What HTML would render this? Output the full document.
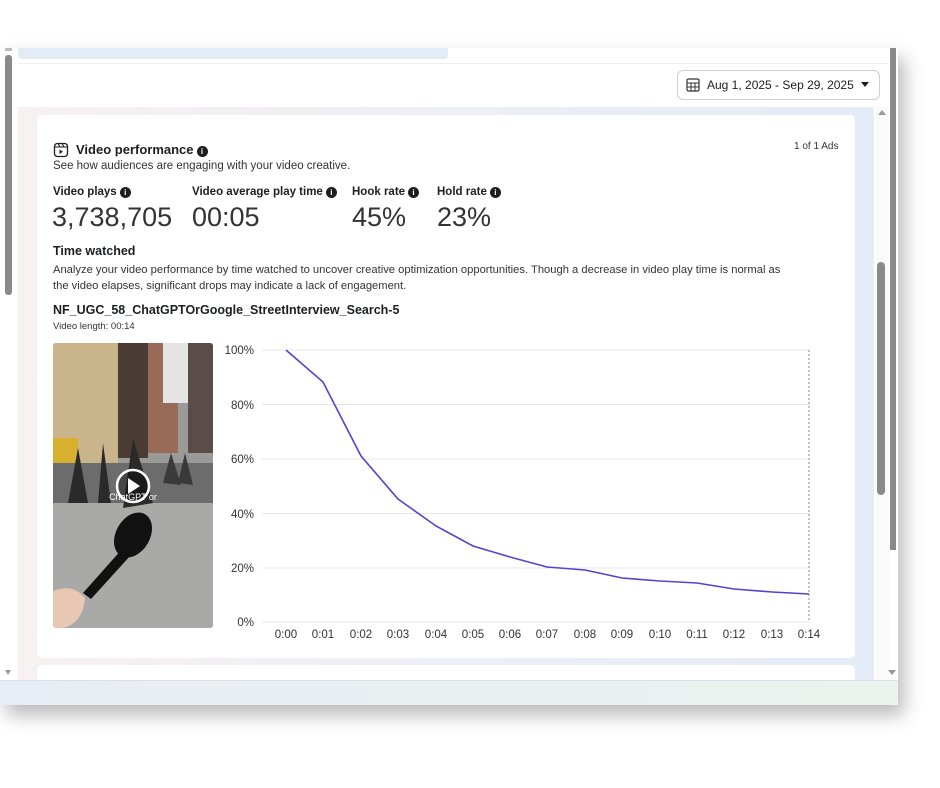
<!DOCTYPE html>
<html><head><meta charset="utf-8"><style>
*{margin:0;padding:0;box-sizing:border-box}
body{width:940px;height:788px;background:#fff;font-family:"Liberation Sans",sans-serif;position:relative;overflow:hidden;color:#1c1e21}
.abs{position:absolute}
.win{left:0;top:48px;width:898px;height:657px;background:#fff;box-shadow:6px 10px 18px rgba(0,0,0,0.28)}
.t{position:absolute;white-space:nowrap}
.info{display:inline-block;width:11px;height:11px;border-radius:50%;background:#1c1e21;color:#fff;font-size:8px;line-height:11px;text-align:center;font-weight:bold;vertical-align:0px;margin-left:3px}
</style></head><body>
<div class="abs win"></div>
<div class="abs" style="left:18px;top:48px;width:430px;height:11px;background:#e3ecf6;border-radius:0 0 4px 4px"></div>
<div class="abs" style="left:18px;top:63px;width:870px;height:1px;background:#eceef1"></div>
<div class="abs" style="left:5px;top:55px;width:7px;height:240px;background:#8a8a8a;border-radius:3px"></div>
<div class="abs" style="left:5px;top:48px;width:7px;height:3px;background:#bbb"></div>
<div class="abs" style="left:677px;top:70px;width:203px;height:30px;border:1px solid #cbd0d6;border-radius:6px;background:#fff"></div>
<svg class="abs" style="left:686px;top:78px" width="14" height="14" viewBox="0 0 14 14"><rect x="1" y="1" width="12" height="12" rx="1.5" fill="none" stroke="#333" stroke-width="1.2"/><path d="M1 5h12M1 9h12M5 5v8M9 5v8" stroke="#333" stroke-width="1"/></svg>
<div class="t" style="left:707px;top:78px;font-size:12px;color:#1c1e21">Aug 1, 2025 - Sep 29, 2025</div>
<div class="t" style="left:861px;top:82px;width:0;height:0;border-left:4.5px solid transparent;border-right:4.5px solid transparent;border-top:5px solid #1c1e21"></div>
<div class="abs" style="left:18px;top:107px;width:856px;height:573px;background:linear-gradient(90deg,#f7f1f1,#eeeef6 50%,#e4ecf7)"></div>
<div class="abs" style="left:876px;top:107px;width:13px;height:573px;background:#fafafa"></div>
<div class="t" style="left:878px;top:110px;width:0;height:0;border-left:4px solid transparent;border-right:4px solid transparent;border-bottom:5px solid #999"></div>
<div class="abs" style="left:877px;top:262px;width:8px;height:233px;background:#8a8a8a;border-radius:4px"></div>
<div class="t" style="left:888px;top:670px;width:0;height:0;border-left:4px solid transparent;border-right:4px solid transparent;border-top:5px solid #999"></div>
<div class="t" style="left:5px;top:670px;width:0;height:0;border-left:3px solid transparent;border-right:3px solid transparent;border-top:5px solid #999"></div>
<div class="abs" style="left:890px;top:48px;width:6px;height:502px;background:#8a8a8a"></div>
<div class="abs" style="left:37px;top:115px;width:818px;height:543px;background:#fff;border-radius:5px"></div>
<div class="abs" style="left:37px;top:665px;width:818px;height:20px;background:#fff;border-radius:5px"></div>
<div class="abs" style="left:0;top:680px;width:898px;height:25px;background:linear-gradient(90deg,#e7edf4,#eaf3ee);border-top:1px solid #dde"></div>
<svg class="abs" style="left:53px;top:142px" width="16" height="16" viewBox="0 0 16 16"><rect x="1.5" y="1.5" width="13" height="13" rx="3" fill="none" stroke="#1c1e21" stroke-width="1.3"/><path d="M1.5 5h13M5 1.5l2 3.5M9 1.5l2 3.5" stroke="#1c1e21" stroke-width="1.1" fill="none"/><path d="M6.5 7.5v4.5l3.5-2.2z" fill="#1c1e21"/></svg>
<div class="t" style="left:76px;top:142px;font-size:13px;font-weight:bold">Video performance<span class="info">i</span></div>
<div class="t" style="left:794px;top:141px;font-size:10px;color:#333">1 of 1 Ads</div>
<div class="t" style="left:53px;top:160px;font-size:11.5px;color:#333">See how audiences are engaging with your video creative.</div>
<div class="t" style="left:53px;top:186px;font-size:11.5px;font-weight:bold">Video plays<span class="info">i</span></div>
<div class="t" style="left:192px;top:186px;font-size:11.5px;font-weight:bold">Video average play time<span class="info">i</span></div>
<div class="t" style="left:352px;top:186px;font-size:11.5px;font-weight:bold">Hook rate<span class="info">i</span></div>
<div class="t" style="left:437px;top:186px;font-size:11.5px;font-weight:bold">Hold rate<span class="info">i</span></div>
<div class="t" style="left:52px;top:202px;font-size:27px;color:#333">3,738,705</div>
<div class="t" style="left:192px;top:202px;font-size:27px;color:#333">00:05</div>
<div class="t" style="left:352px;top:202px;font-size:27px;color:#333">45%</div>
<div class="t" style="left:437px;top:202px;font-size:27px;color:#333">23%</div>
<div class="t" style="left:53px;top:244px;font-size:12.5px;font-weight:bold">Time watched</div>
<div class="t" style="left:53px;top:262px;font-size:11.2px;color:#333;line-height:16px">Analyze your video performance by time watched to uncover creative optimization opportunities. Though a decrease in video play time is normal as<br>the video elapses, significant drops may indicate a lack of engagement.</div>
<div class="t" style="left:53px;top:303px;font-size:12.5px;font-weight:bold;color:#1c1e21">NF_UGC_58_ChatGPTOrGoogle_StreetInterview_Search-5</div>
<div class="t" style="left:53px;top:321px;font-size:9.5px;color:#333">Video length: 00:14</div>
<svg class="abs" style="left:53px;top:343px;border-radius:3px" width="160" height="285" viewBox="0 0 160 285">
<rect width="160" height="285" fill="#9a9a98"/>
<rect x="0" y="0" width="65" height="120" fill="#c9b48c"/>
<rect x="65" y="0" width="30" height="115" fill="#4a3c34"/>
<rect x="95" y="0" width="30" height="110" fill="#9a6a58"/>
<rect x="110" y="0" width="30" height="60" fill="#e6e4e2"/>
<rect x="135" y="0" width="25" height="110" fill="#5a4c48"/>
<rect x="0" y="95" width="25" height="30" fill="#d8b030"/>
<rect x="0" y="120" width="160" height="45" fill="#6d6c6c"/>
<rect x="0" y="160" width="160" height="125" fill="#a9a9a7"/>
<path d="M15 160L25 105L35 160ZM45 160L50 100L58 160ZM70 165L80 95L100 160Z" fill="#2a2a2a"/>
<path d="M110 140L118 110L128 142ZM125 140L132 110L140 142Z" fill="#3a3a3a"/>
<circle cx="80" cy="143" r="16" fill="rgba(0,0,0,0.35)" stroke="#fff" stroke-width="2.5"/>
<path d="M75 135v16l12-8z" fill="#fff"/>
<text x="80" y="157" font-size="9" fill="#fff" text-anchor="middle" font-family="Liberation Sans">ChatGPT or</text>
<ellipse cx="80" cy="192" rx="17" ry="24" fill="#121212" transform="rotate(30 80 192)"/>
<path d="M70 205L30 250L38 256L78 212Z" fill="#111"/>
<path d="M0 248Q20 240 32 255Q30 280 10 285H0Z" fill="#e8c8b4"/>
</svg>
<svg class="abs" style="left:215px;top:340px" width="620" height="310" viewBox="215 340 620 310" font-family="Liberation Sans" font-size="11.5" fill="#333">
<g stroke="#e4e6ea" stroke-width="1">
<line x1="262" y1="350" x2="810" y2="350"/><line x1="262" y1="404.5" x2="810" y2="404.5"/><line x1="262" y1="459" x2="810" y2="459"/><line x1="262" y1="513.5" x2="810" y2="513.5"/><line x1="262" y1="568" x2="810" y2="568"/><line x1="262" y1="622" x2="810" y2="622"/>
</g>
<line x1="809" y1="350" x2="809" y2="622" stroke="#888" stroke-dasharray="2,2"/>
<g text-anchor="end"><text x="254" y="354">100%</text><text x="254" y="409">80%</text><text x="254" y="463">60%</text><text x="254" y="518">40%</text><text x="254" y="572">20%</text><text x="254" y="626">0%</text></g>
<g text-anchor="middle"><text x="286" y="638">0:00</text><text x="323" y="638">0:01</text><text x="361" y="638">0:02</text><text x="398" y="638">0:03</text><text x="436" y="638">0:04</text><text x="473" y="638">0:05</text><text x="510" y="638">0:06</text><text x="547" y="638">0:07</text><text x="585" y="638">0:08</text><text x="622" y="638">0:09</text><text x="660" y="638">0:10</text><text x="697" y="638">0:11</text><text x="734" y="638">0:12</text><text x="772" y="638">0:13</text><text x="809" y="638">0:14</text></g>
<polyline fill="none" stroke="#5b3fd1" stroke-width="1.6" points="286,350 323,382 361,456 398,499 436,526 473,546 510,557 547,567 585,570 622,578 660,581 697,583 734,589 772,592 809,594"/>
</svg>
</body></html>
